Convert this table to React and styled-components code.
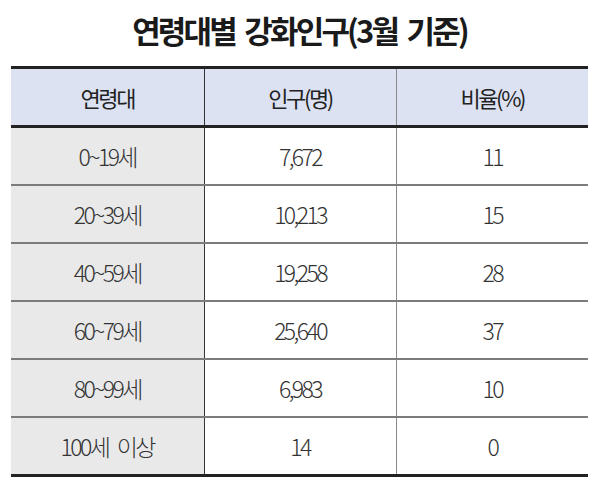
import React from 'react';
import styled, { createGlobalStyle } from 'styled-components';

const GlobalStyle = createGlobalStyle`
    body {
        margin: 0;
        background: #ffffff;
        font-family: "Noto Sans CJK KR", "Noto Sans", sans-serif;
        color: #222;
    }
`;

const Page = styled.div`
    width: 600px;
    height: 487px;
    padding: 0 12px 0 11px;
    box-sizing: border-box;
`;

const Title = styled.h1`
    margin: 0;
    height: 66px;
    display: flex;
    align-items: center;
    justify-content: center;
    padding-bottom: 8px;
    box-sizing: border-box;
    font-size: 31px;
    font-weight: 700;
    letter-spacing: -2.8px;
    word-spacing: 5px;
    color: #1a1a1a;
`;

const Table = styled.table`
    width: 577px;
    border-collapse: collapse;
    table-layout: fixed;
    border-top: 3px solid #222;
    border-bottom: 3px solid #222;
`;

const HeadCell = styled.th`
    height: 56px;
    padding: 0;
    background: #dde2f3;
    font-size: 22px;
    font-weight: 400;
    letter-spacing: -2.4px;
    color: #222;
    border-bottom: 3px solid #222;
    border-left: ${p => (p.$col === 1 ? '1px solid #333' : p.$col === 2 ? '1px solid #8a8a8a' : 'none')};
`;

const Cell = styled.td`
    height: 56px;
    padding: 0;
    text-align: center;
    font-size: 23px;
    font-weight: 300;
    letter-spacing: -2.6px;
    word-spacing: 6px;
    color: #333;
    background: ${p => (p.$col === 0 ? '#e9e9ea' : '#ffffff')};
    border-top: ${p => (p.$first ? 'none' : '2px solid #7c7c7c')};
    border-left: ${p => (p.$col === 1 ? '1px solid #333' : p.$col === 2 ? '1px solid #8a8a8a' : 'none')};
`;

const rows = [
    ['0~19세', '7,672', '11'],
    ['20~39세', '10,213', '15'],
    ['40~59세', '19,258', '28'],
    ['60~79세', '25,640', '37'],
    ['80~99세', '6,983', '10'],
    ['100세 이상', '14', '0'],
];

export default function App() {
    return (
        <Page>
            <GlobalStyle />
            <Title>연령대별 강화인구(3월 기준)</Title>
            <Table>
                <colgroup>
                    <col style={{ width: 193 }} />
                    <col style={{ width: 192 }} />
                    <col style={{ width: 192 }} />
                </colgroup>
                <thead>
                    <tr>
                        <HeadCell $col={0}>연령대</HeadCell>
                        <HeadCell $col={1}>인구(명)</HeadCell>
                        <HeadCell $col={2}>비율(%)</HeadCell>
                    </tr>
                </thead>
                <tbody>
                    {rows.map((r, i) => (
                        <tr key={r[0]}>
                            {r.map((v, c) => (
                                <Cell key={c} $col={c} $first={i === 0}>{v}</Cell>
                            ))}
                        </tr>
                    ))}
                </tbody>
            </Table>
        </Page>
    );
}
